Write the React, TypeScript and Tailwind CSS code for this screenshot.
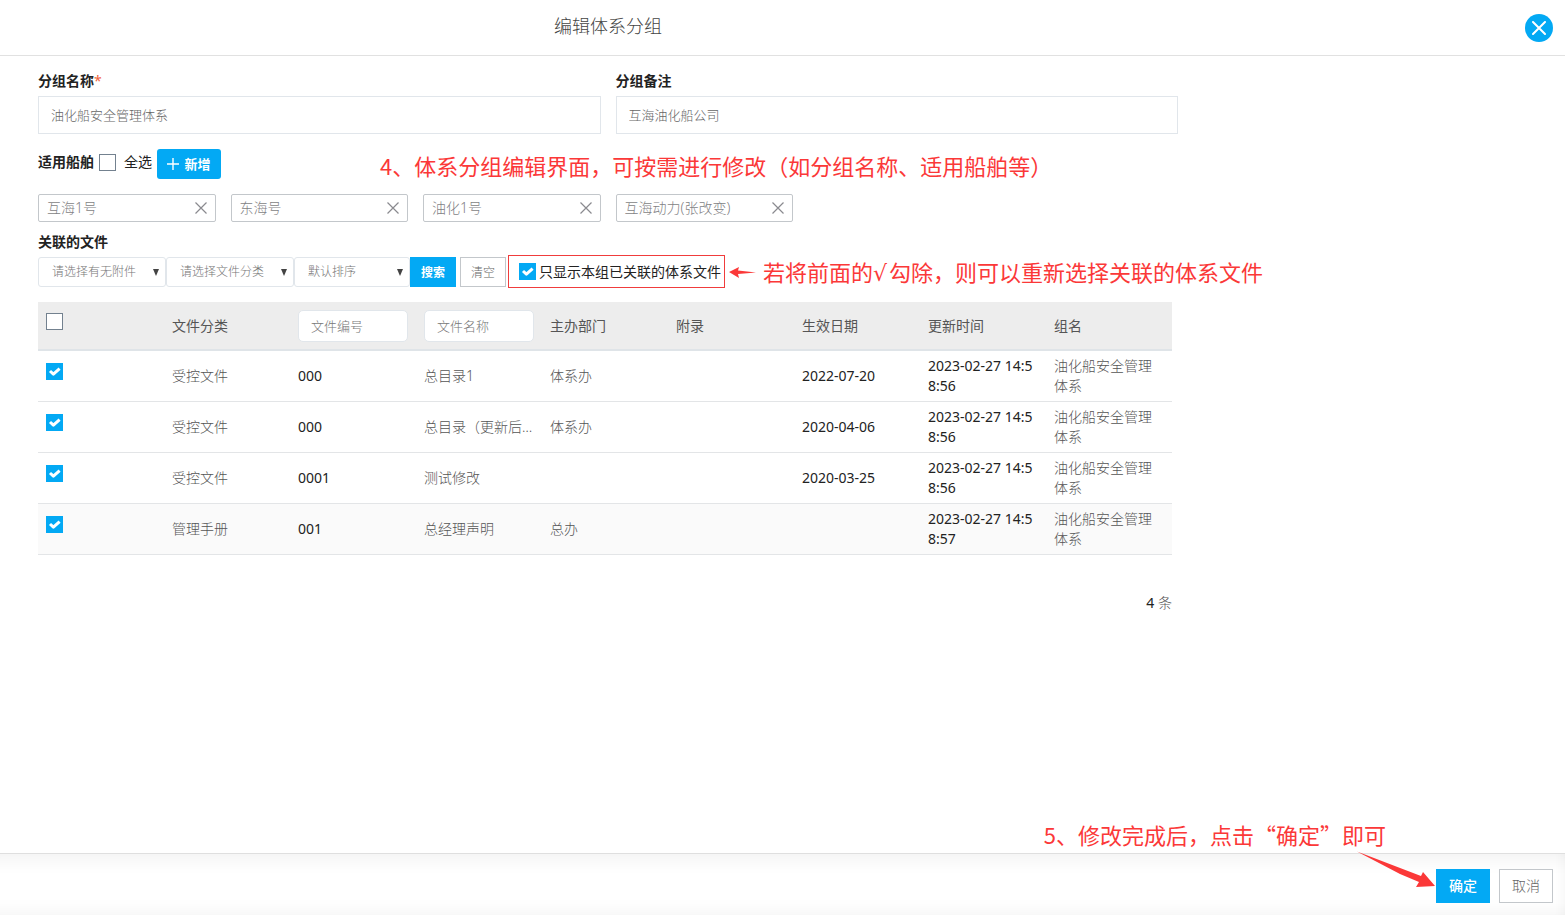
import React, { useState } from 'react';

interface FileRow {
    category: string;
    code: string;
    name: string;
    department: string;
    effective: string;
    updated: string;
    group: string;
}

const ships = ['互海1号', '东海号', '油化1号', '互海动力(张改变)'];

const files: FileRow[] = [
    {
        category: '受控文件',
        code: '000',
        name: '总目录1',
        department: '体系办',
        effective: '2022-07-20',
        updated: '2023-02-27 14:58:56',
        group: '油化船安全管理体系'
    },
    {
        category: '受控文件',
        code: '000',
        name: '总目录（更新后）',
        department: '体系办',
        effective: '2020-04-06',
        updated: '2023-02-27 14:58:56',
        group: '油化船安全管理体系'
    },
    {
        category: '受控文件',
        code: '0001',
        name: '测试修改',
        department: '',
        effective: '2020-03-25',
        updated: '2023-02-27 14:58:56',
        group: '油化船安全管理体系'
    },
    {
        category: '管理手册',
        code: '001',
        name: '总经理声明',
        department: '总办',
        effective: '',
        updated: '2023-02-27 14:58:57',
        group: '油化船安全管理体系'
    }
];

interface CheckboxProps {
    id?: string;
    label?: string;
    initial?: boolean;
}

function Checkbox({ id, label, initial = false }: CheckboxProps): React.ReactElement {
    const [checked, setChecked] = useState(initial);

    return (
        <span className="inline-grid size-[17px] shrink-0 place-items-center">
            <input
                id={id}
                type="checkbox"
                aria-label={label}
                checked={checked}
                onChange={(e) => setChecked(e.target.checked)}
                className="peer col-start-1 row-start-1 size-[17px] appearance-none border border-[#73818f] bg-white checked:border-[#03a9f4] checked:bg-[#03a9f4]"
            />
            <svg
                viewBox="0 0 17 17"
                className="pointer-events-none invisible col-start-1 row-start-1 size-[17px] peer-checked:visible"
            >
                <path d="M4 8 7.4 11.2 13.6 5.6" fill="none" stroke="#fff" strokeWidth="3" strokeLinejoin="round" />
            </svg>
        </span>
    );
}

interface FilterSelectProps {
    label: string;
    width: string;
}

function FilterSelect({ label, width }: FilterSelectProps): React.ReactElement {
    return (
        <div className={`relative ${width}`}>
            <select
                aria-label={label}
                className="h-[30px] w-full appearance-none rounded-[3px] border border-[#e1e6eb] bg-white pr-5 pl-[13px] text-xs font-light text-[#777]"
            >
                <option>{label}</option>
            </select>
            <svg viewBox="0 0 6 7" className="pointer-events-none absolute top-[12px] right-[7px] h-[7px] w-[6px]">
                <path d="M0 0h6L3 7z" fill="#444" />
            </svg>
        </div>
    );
}

export default function App(): React.ReactElement {
    return (
        <div className="flex min-h-screen flex-col bg-white font-['Noto_Sans','Noto_Sans_CJK_SC',sans-serif] text-sm leading-5 text-[#222]">
            <header className="flex h-14 items-center justify-between border-b border-[#e1e1e1] pr-3 pl-[38px]">
                <h1 className="w-full max-w-[1140px] pb-1 text-center text-lg font-light text-[#444]">编辑体系分组</h1>
                <button
                    type="button"
                    aria-label="关闭"
                    className="grid size-7 shrink-0 place-items-center rounded-full bg-[#03a9f4]"
                >
                    <svg viewBox="0 0 14 14" className="size-[14px]">
                        <path d="M1 1l12 12M13 1 1 13" stroke="#fff" strokeWidth="2" strokeLinecap="round" />
                    </svg>
                </button>
            </header>

            <main className="flex-1 pt-[15px] pl-[38px]">
                <div className="grid max-w-[1140px] grid-cols-2 gap-[15px]">
                    <div>
                        <label htmlFor="group-name" className="mb-[5px] block font-bold">
                            分组名称<span className="font-normal text-[#f0643c]">*</span>
                        </label>
                        <input
                            id="group-name"
                            defaultValue="油化船安全管理体系"
                            className="h-[38px] w-full border border-[#e1e6eb] px-3 pb-[2px] text-[13px] font-light text-[#666]"
                        />
                    </div>
                    <div>
                        <label htmlFor="group-note" className="mb-[5px] block font-bold">
                            分组备注
                        </label>
                        <input
                            id="group-note"
                            defaultValue="互海油化船公司"
                            className="h-[38px] w-full border border-[#e1e6eb] px-3 pb-[2px] text-[13px] font-light text-[#666]"
                        />
                    </div>
                </div>

                {/* Ships */}
                <div className="mt-[15px] flex h-[30px] items-center">
                    <div className="flex items-center pb-1">
                        <span className="mr-[5px] font-bold">适用船舶</span>
                        <Checkbox id="all-ships" />
                        <label htmlFor="all-ships" className="mr-[5px] ml-2">
                            全选
                        </label>
                    </div>
                    <button
                        type="button"
                        className="flex h-[30px] w-16 items-center justify-center gap-[5px] rounded-[3px] bg-[#03a9f4] text-[13px] font-bold text-white"
                    >
                        <svg viewBox="0 0 12 12" className="size-3">
                            <path d="M6 0v12M0 6h12" stroke="#fff" strokeWidth="1.4" />
                        </svg>
                        新增
                    </button>
                    <p className="ml-[159px] pt-[2px] font-['Noto_Sans_CJK_SC',sans-serif] text-[22px] whitespace-nowrap text-[#fb3838]">
                        4、体系分组编辑界面，可按需进行修改（如分组名称、适用船舶等）
                    </p>
                </div>

                <ul className="mt-[15px] grid max-w-[1140px] grid-cols-6 gap-[15px]">
                    {ships.map((ship) => (
                        <li
                            key={ship}
                            className="flex h-7 items-center justify-between rounded-[2px] border border-[#c3c7cb] pr-2 pl-2 font-light text-[#7f7f84]"
                        >
                            {ship}
                            <button type="button" aria-label={`移除${ship}`}>
                                <svg viewBox="0 0 12 12" className="size-3">
                                    <path d="M.5.5l11 11M11.5.5l-11 11" stroke="#8a8a8f" strokeWidth="1.2" />
                                </svg>
                            </button>
                        </li>
                    ))}
                </ul>

                {/* Linked files */}
                <h2 className="mt-[10px] font-bold">关联的文件</h2>
                <div className="mt-[3px] flex h-[33px] items-center">
                    <FilterSelect label="请选择有无附件" width="w-32" />
                    <FilterSelect label="请选择文件分类" width="w-32" />
                    <FilterSelect label="默认排序" width="w-[116px]" />
                    <button type="button" className="h-[30px] w-[46px] bg-[#03a9f4] pt-[2px] text-xs font-bold text-white">
                        搜索
                    </button>
                    <button
                        type="button"
                        className="ml-1 h-[30px] w-[46px] border border-[#c3c7cb] pt-[2px] text-xs font-light text-[#666]"
                    >
                        清空
                    </button>
                    <div className="ml-[2px] flex h-[33px] items-center border border-[#f03c3c] pr-[3px] pl-[10px]">
                        <Checkbox id="linked-only" initial />
                        <label htmlFor="linked-only" className="ml-[3px] whitespace-nowrap">
                            只显示本组已关联的体系文件
                        </label>
                    </div>
                    <svg viewBox="0 0 28 12" className="mr-[6px] ml-1 h-3 w-7 shrink-0">
                        <path d="M0 6 10 1 9 4.5 27 6.5 9 8 10 12z" fill="#fb3838" />
                    </svg>
                    <p className="pt-[2px] font-['Noto_Sans_CJK_SC',sans-serif] text-[22px] whitespace-nowrap text-[#fb3838]">
                        若将前面的<span className="mr-[2px] font-['DejaVu_Sans',sans-serif]">√</span>
                        勾除，则可以重新选择关联的体系文件
                    </p>
                </div>

                <div className="max-w-[1134px]">
                    <table className="mt-[14px] w-full table-fixed border-collapse text-left">
                        <thead className="bg-[#ededed] text-[#555]">
                            <tr className="h-12 border-b-2 border-[#dfe4e8]">
                                <th className="px-2 font-normal">
                                    <span className="flex pb-2">
                                        <Checkbox label="全选文件" />
                                    </span>
                                </th>
                                <th className="px-2 font-normal">文件分类</th>
                                <th className="px-2 font-normal">
                                    <input
                                        aria-label="文件编号"
                                        placeholder="文件编号"
                                        className="block h-8 w-full rounded-[5px] border border-[#e1e6eb] bg-white px-3 text-[13px] font-light placeholder:text-[#777]"
                                    />
                                </th>
                                <th className="px-2 font-normal">
                                    <input
                                        aria-label="文件名称"
                                        placeholder="文件名称"
                                        className="block h-8 w-full rounded-[5px] border border-[#e1e6eb] bg-white px-3 text-[13px] font-light placeholder:text-[#777]"
                                    />
                                </th>
                                <th className="px-2 font-normal">主办部门</th>
                                <th className="px-2 font-normal">附录</th>
                                <th className="px-2 font-normal">生效日期</th>
                                <th className="px-2 font-normal">更新时间</th>
                                <th className="px-2 font-normal">组名</th>
                            </tr>
                        </thead>
                        <tbody>
                            {files.map((file, i) => (
                                <tr key={i} className="h-[51px] border-b border-[#e3e5e7] last:bg-[#fafafa]">
                                    <td className="px-2">
                                        <span className="flex pb-2">
                                            <Checkbox label={`选择${file.name}`} initial />
                                        </span>
                                    </td>
                                    <td className="px-2 font-light text-[#555]">{file.category}</td>
                                    <td className="px-2">{file.code}</td>
                                    <td className="truncate px-2 font-light text-[#555]">{file.name}</td>
                                    <td className="px-2 font-light text-[#555]">{file.department}</td>
                                    <td className="px-2" />
                                    <td className="px-2">{file.effective}</td>
                                    <td className="px-2 break-all">{file.updated}</td>
                                    <td className="px-2 font-light break-all text-[#555]">{file.group}</td>
                                </tr>
                            ))}
                        </tbody>
                    </table>
                    <p className="mt-[38px] text-right">
                        4 <span className="font-light text-[#555]">条</span>
                    </p>
                </div>
            </main>

            <footer className="relative flex h-[62px] items-center justify-end gap-[9px] border-t border-[#dfdfdf] pt-[2px] pr-3 shadow-[inset_0_24px_18px_-18px_rgba(0,0,0,0.05),inset_0_-20px_18px_-18px_rgba(0,0,0,0.05),inset_-14px_0_12px_-12px_rgba(0,0,0,0.04)]">
                <button type="button" className="h-[34px] w-[54px] bg-[#03a9f4] font-medium text-white">
                    确定
                </button>
                <button type="button" className="h-[34px] w-[54px] border border-[#c3c7cb] bg-white font-light text-[#666]">
                    取消
                </button>
                <p className="absolute right-[179px] bottom-[71px] font-['Noto_Sans_CJK_SC',sans-serif] text-[22px] whitespace-nowrap text-[#fb3838]">
                    5、修改完成后，点击“确定”即可
                </p>
                <svg viewBox="0 0 80 38" className="absolute right-[129px] bottom-[26px] h-[38px] w-20">
                    <path d="M1 .5 65 25 67 21 79 35 60 36 63 31 44 23Z" fill="#fb3838" />
                </svg>
            </footer>
        </div>
    );
}
